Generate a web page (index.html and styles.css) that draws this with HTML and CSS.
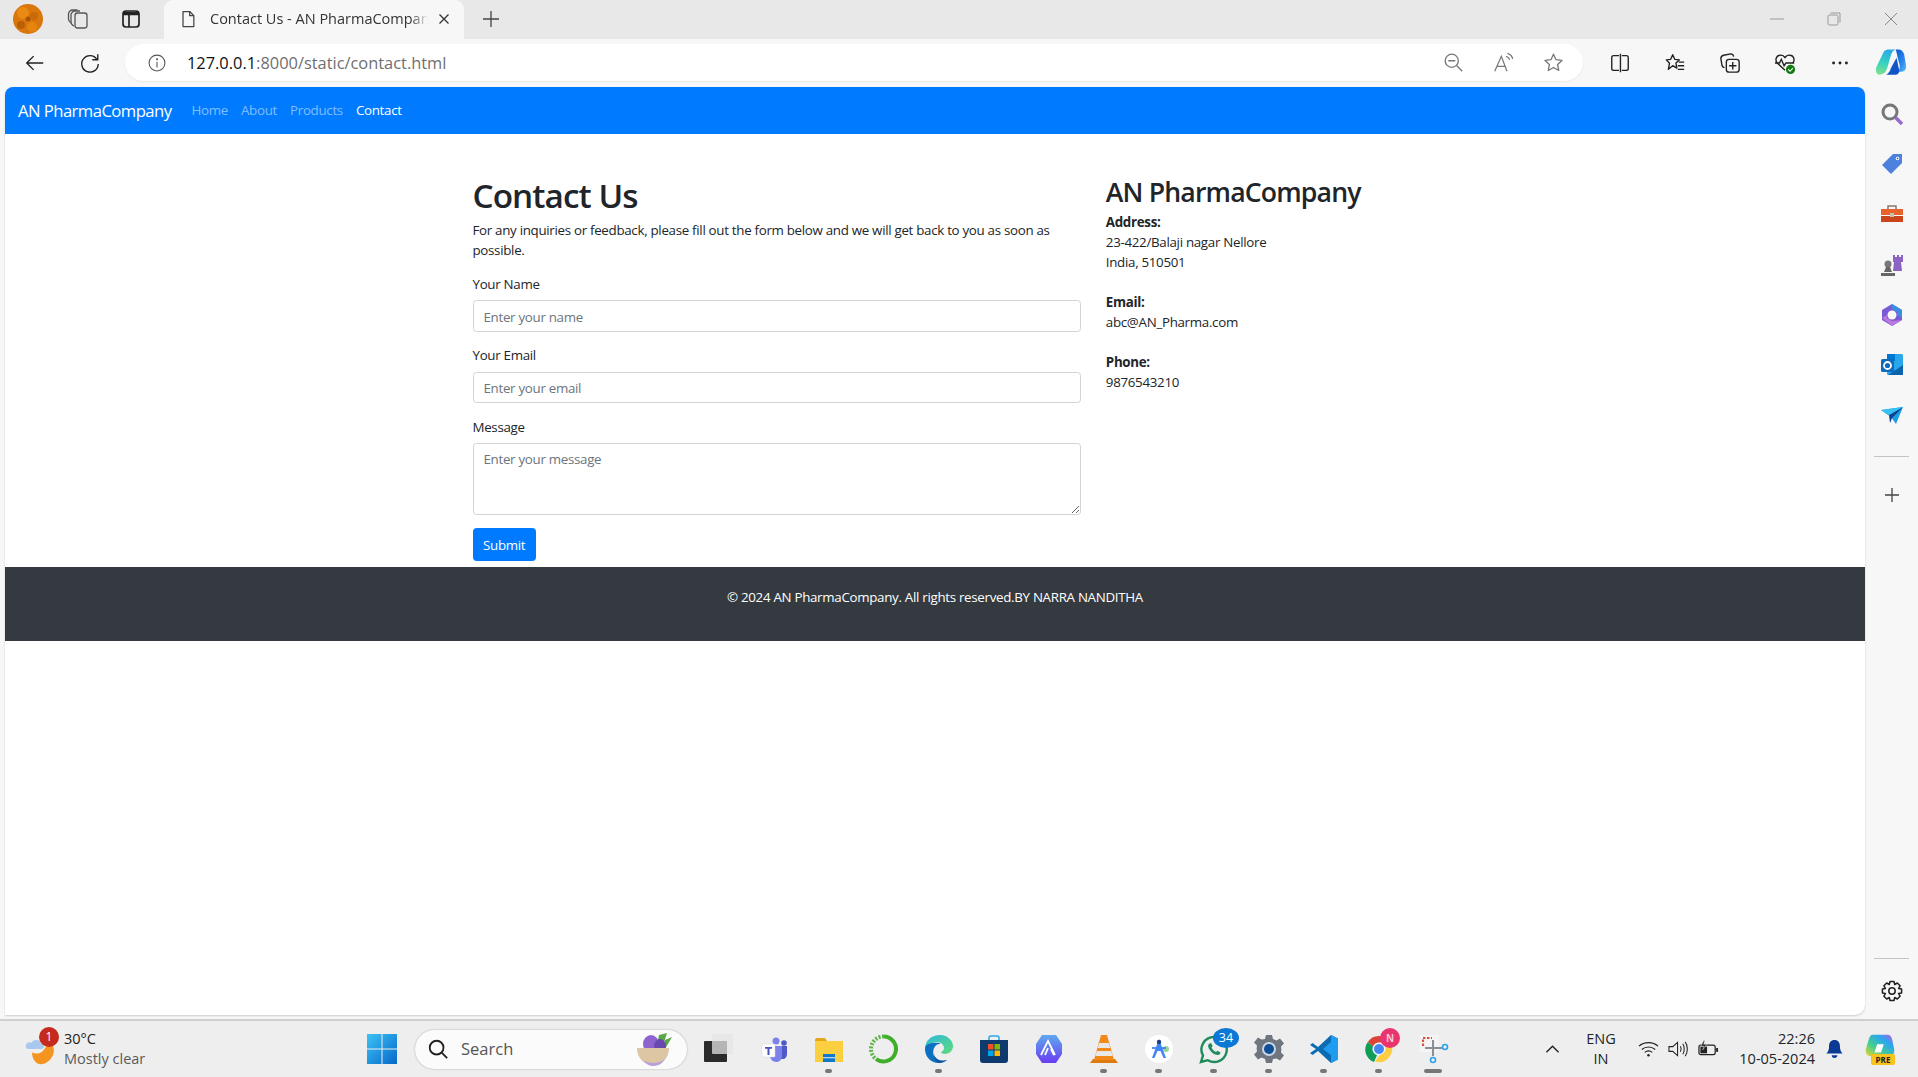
FILE: index.html
```html
<!DOCTYPE html>
<html lang="en">
<head>
  <meta charset="UTF-8">
  <meta name="viewport" content="width=device-width, initial-scale=1.0">
  <title>Contact Us - AN PharmaCompany</title>
  <link rel="stylesheet" href="styles.css">
</head>
<body>
  <!-- browser tab strip -->
  <div class="tabbar">
    <svg class="avatar" viewBox="0 0 30 30"><circle cx="15" cy="15" r="15" fill="#d9760c"/><circle cx="10" cy="9" r="6" fill="#e98a12"/><circle cx="21" cy="12" r="4" fill="#c96a08"/><circle cx="8" cy="21" r="4" fill="#b85f08"/><circle cx="19" cy="23" r="5" fill="#e58510"/><circle cx="15" cy="15" r="2.500" fill="#a95305"/></svg>
    <svg class="tb-icon" viewBox="0 0 24 24" fill="none" stroke="#555" stroke-width="1.300"><rect x="9" y="6" width="12" height="15" rx="2.500" fill="#e8e8e8"/><path d="M8 19c-2-1-3-2-3-4V8c0-2 2-4 4-4h5"/><path d="M5 16c-1.500-1-2.500-2-2.500-4V7c0-2 2-4 4-4h5"/></svg>
    <svg class="tb-icon" viewBox="0 0 24 24" fill="none" stroke="#222" stroke-width="1.700"><rect x="4" y="4" width="16" height="16" rx="3"/><path d="M4 6.500h16" stroke-width="3.500"/><path d="M10 8v12"/></svg>
    <div class="tab">
      <svg class="tab-doc" viewBox="0 0 24 24" fill="none" stroke="#444" stroke-width="1.500"><path d="M6 3h8l5 5v13H6z" stroke-linejoin="round"/><path d="M14 3v5h5"/></svg>
      <span class="tab-title">Contact Us - AN PharmaCompany</span>
      <svg class="tab-close" viewBox="0 0 12 12" stroke="#333" stroke-width="1.300"><path d="M1.500 1.500l9 9M10.500 1.500l-9 9"/></svg>
    </div>
    <svg class="tab-new" viewBox="0 0 20 20" stroke="#444" stroke-width="1.300"><path d="M10 2v16M2 10h16"/></svg>
    <div class="win-controls">
      <svg viewBox="0 0 14 14" stroke="#999" fill="none"><path d="M0 7h14"/></svg>
      <svg viewBox="0 0 14 14" stroke="#999" fill="none"><rect x="1" y="3" width="10" height="10" rx="1.500"/><path d="M3.500 1H13v9.500"/></svg>
      <svg viewBox="0 0 14 14" stroke="#888" fill="none"><path d="M1 1l12 12M13 1L1 13"/></svg>
    </div>
  </div>

  <!-- address bar row -->
  <div class="toolbar">
    <svg class="nav-btn" viewBox="0 0 24 24" fill="none" stroke="#222" stroke-width="1.500"><path d="M21 12H3M10.500 4.500L3 12l7.500 7.500"/></svg>
    <svg class="nav-btn" viewBox="0 0 24 24" fill="none" stroke="#222" stroke-width="1.500"><path d="M19.500 8A9 9 0 1 0 21 13"/><path d="M20.500 2.500V8.500H14.500"/></svg>
    <div class="address">
      <svg class="addr-info" viewBox="0 0 24 24" fill="none" stroke="#555" stroke-width="1.300"><circle cx="12" cy="12" r="9.500"/><path d="M12 10.500v7"/><circle cx="12" cy="7.500" r=".6"/></svg>
      <span class="url">127.0.0.1<span class="url-rest">:8000/static/contact.html</span></span>
      <div class="addr-actions">
        <svg viewBox="0 0 24 24" fill="none" stroke="#777" stroke-width="1.500"><circle cx="10" cy="10" r="7.500"/><path d="M6 10h8M15.500 15.500L22 22"/></svg>
        <svg viewBox="0 0 24 24" fill="none" stroke="#777" stroke-width="1.400"><path d="M2 22L9.500 5 16 22M4.500 16.500h10"/><path d="M15 5c2 .5 3.500 2 4 4M16.500 1.500c3 1 5.500 3.500 6 6.500"/></svg>
        <svg viewBox="0 0 24 24" fill="none" stroke="#777" stroke-width="1.500"><path d="M12 2.500l2.900 6.300 6.800.8-5 4.700 1.300 6.800-6-3.400-6 3.400 1.300-6.800-5-4.700 6.800-.8z" stroke-linejoin="round"/></svg>
      </div>
    </div>
    <div class="tool-actions">
      <svg viewBox="0 0 24 24" fill="none" stroke="#222" stroke-width="1.500"><path d="M11 4H5a2 2 0 0 0-2 2v12a2 2 0 0 0 2 2h6M14 4h5a2 2 0 0 1 2 2v12a2 2 0 0 1-2 2h-5M12.500 2v20"/></svg>
      <svg viewBox="0 0 24 24" fill="none" stroke="#222" stroke-width="1.500"><path d="M9.500 3l2.200 5 5 .6-3.700 3.500 1 5.400-4.500-2.600-4.800 4 1.300-6.600L2.500 8.600l4.800-.6z" stroke-linejoin="round"/><path d="M16 11h6M15 15h7M15 19h7"/></svg>
      <svg viewBox="0 0 24 24" fill="none" stroke="#222" stroke-width="1.500"><rect x="8" y="8" width="14" height="14" rx="3"/><path d="M15 11v8M11 15h8"/><path d="M6 17c-2-.5-3-2-3-4l-1-6c0-2 1-3 3-3.500l8-1.500c1.500 0 2.500 1 3 3"/></svg>
      <svg viewBox="0 0 24 24" fill="none" stroke="#222" stroke-width="1.500"><path d="M12 20L3.500 12C1 9 2 4 6.500 3.500 9 3 11 4.500 12 6c1-1.500 3-3 5.500-2.500C22 4 23 9 20.500 12"/><path d="M1 12h5l2-4 3 7 2-3h9"/><circle cx="18" cy="19" r="5" fill="#107c10" stroke="none"/><path d="M15.500 19l2 2 3-3.500" stroke="#fff" stroke-width="1.200"/></svg>
      <svg viewBox="0 0 24 24" fill="#222"><circle cx="5" cy="12" r="1.600"/><circle cx="12" cy="12" r="1.600"/><circle cx="19" cy="12" r="1.600"/></svg>
    </div>
    <svg class="copilot" viewBox="0 0 32 28">
      <defs>
        <linearGradient id="cop" x1="0.500" y1="0" x2="0.300" y2="1"><stop offset="0" stop-color="#2aa8e8"/><stop offset=".55" stop-color="#38d3c0"/><stop offset="1" stop-color="#7fe08c"/></linearGradient>
        <linearGradient id="cop2" x1="0.200" y1="0" x2="1" y2="1"><stop offset="0" stop-color="#0b5fd4"/><stop offset=".6" stop-color="#2f8cf0"/><stop offset="1" stop-color="#5cc4f5"/></linearGradient>
      </defs>
      <path d="M8 3c1-2 3-3 5-3h8c-3 1-4 3-5 6l-4 14c-1 4-4 7-8 7H3c-3-1-4-4-3-7z" fill="url(#cop)"/>
      <path d="M21 0h3c3 0 5 2 6 5l2 12c1 5-2 7-5 7h-5c3-1 4-4 3-8l-2-8c-.5-2-1-6-2-8z" fill="url(#cop2)"/>
      <path d="M22 9l-6 11c-1 4-3 6-5 7h10c3 0 5-3 3-8z" fill="#0f55c8"/>
    </svg>
  </div>

  <div class="browser-body">
    <div class="page">
      <nav class="navbar">
        <a class="brand">AN PharmaCompany</a>
        <a class="nav-link">Home</a>
        <a class="nav-link">About</a>
        <a class="nav-link">Products</a>
        <a class="nav-link current">Contact</a>
      </nav>

      <main class="container">
        <section class="contact-form">
          <h1>Contact Us</h1>
          <p>For any inquiries or feedback, please fill out the form below and we will get back to you as soon as possible.</p>
          <form>
            <div class="form-group">
              <label for="name">Your Name</label>
              <input id="name" type="text" placeholder="Enter your name">
            </div>
            <div class="form-group">
              <label for="email">Your Email</label>
              <input id="email" type="email" placeholder="Enter your email">
            </div>
            <div class="form-group">
              <label for="message">Message</label>
              <textarea id="message" rows="3" placeholder="Enter your message"></textarea>
            </div>
            <button type="button" class="btn-submit">Submit</button>
          </form>
        </section>
        <section class="contact-info">
          <h2>AN PharmaCompany</h2>
          <p><strong>Address:</strong><br>23-422/Balaji nagar Nellore<br>India, 510501</p>
          <p><strong>Email:</strong><br>abc@AN_Pharma.com</p>
          <p><strong>Phone:</strong><br>9876543210</p>
        </section>
      </main>

      <footer class="footer">
        <p>© 2024 AN PharmaCompany. All rights reserved.BY NARRA NANDITHA</p>
      </footer>
    </div>

    <!-- edge sidebar -->
    <aside class="sidebar">
      <svg viewBox="0 0 24 24" fill="none"><circle cx="10" cy="10" r="7" stroke="#777" stroke-width="3"/><path d="M15.500 15.500L22 22" stroke="#9a6ad0" stroke-width="3.500"/></svg>
      <svg viewBox="0 0 24 24"><path d="M13 2h9v9L11 22 2 13z" fill="#4c82dd"/><circle cx="17.500" cy="6.500" r="1.800" fill="#fff"/><circle cx="17.500" cy="6.500" r=".8" fill="#25479a"/></svg>
      <svg viewBox="0 0 24 24"><path d="M8 7V4h8v3" fill="none" stroke="#8a7a70" stroke-width="1.500"/><path d="M1 7h22v6H1z" fill="#e8622c"/><path d="M1 14h22v6H1z" fill="#c9441a"/><rect x="10" y="11" width="4" height="4" fill="#c8bdb5"/></svg>
      <svg viewBox="0 0 24 24"><circle cx="8" cy="11" r="3.500" fill="#777"/><path d="M6 14h4l2 5H4zM1 20h14v3H1z" fill="#666"/><path d="M14 2h2v2h2V2h2v2h2V2h2v7h-2l1 9H14l1-9h-1z" fill="#8a63c4" transform="translate(-1 0)"/></svg>
      <svg viewBox="0 0 24 24"><path d="M12 1l10 6v10l-10 6-10-6V7z" fill="#7a5bd6"/><path d="M12 1l10 6v8l-5-3V9l-5-3z" fill="#3a8fe0"/><path d="M2 15l5-3v3l5 3 10-1-10 6z" fill="#b978dd"/><circle cx="12" cy="12" r="4.500" fill="#f7f7f7"/></svg>
      <svg viewBox="0 0 24 24"><rect x="7" y="1" width="16" height="21" rx="1.500" fill="#28a8ea"/><path d="M7 1h8v7H7z" fill="#0078d4"/><path d="M8 22l15-10v10z" fill="#0a64ad"/><rect x="1" y="6" width="13" height="13" rx="1.500" fill="#0f6cbd"/><circle cx="7.500" cy="12.500" r="3.500" fill="none" stroke="#fff" stroke-width="1.800"/></svg>
      <svg viewBox="0 0 24 24"><path d="M1 7l22-3-7 17-5-7z" fill="#1b9de2"/><path d="M23 4L9 12l1 8 2-5z" fill="#0b3f8f"/><path d="M1 7l8 5L23 4z" fill="#36c1f0"/></svg>
      <hr class="side-rule">
      <svg class="side-plus" viewBox="0 0 20 20" stroke="#444" stroke-width="1.300"><path d="M10 3v14M3 10h14"/></svg>
      <hr class="side-rule rule-bottom">
      <svg class="side-gear" viewBox="0 0 24 24" fill="none" stroke="#222" stroke-width="1.500"><circle cx="12" cy="12" r="3.200"/><path d="M10 2.500h4l.7 3 2.600-1.500 2.800 2.800-1.500 2.600 3 .7v3.800l-3 .7 1.500 2.600-2.800 2.800-2.600-1.500-.7 3h-4l-.7-3-2.600 1.500-2.800-2.800 1.500-2.600-3-.7V10.100l3-.7-1.500-2.600 2.800-2.800 2.600 1.500z" stroke-linejoin="round"/></svg>
    </aside>
  </div>

  <!-- windows taskbar -->
  <div class="taskbar">
    <div class="weather">
      <svg class="weather-icon" viewBox="0 0 34 36"><path d="M8 22C16 26 24 20 26 8c6 4 8 10 6 16-3 8-10 12-16 11-5-1-8-7-8-13z" fill="#f5951f"/><path d="M3 18a4 4 0 0 1 4-7 6 6 0 0 1 11 1 3 3 0 0 1 1 6z" fill="#a9c8ee"/></svg>
      <span class="weather-badge">1</span>
      <div class="weather-text"><span class="temp">30°C</span><span class="cond">Mostly clear</span></div>
    </div>
    <svg class="start" viewBox="0 0 30 30"><defs><linearGradient id="win" x1="0" y1="0" x2="1" y2="1"><stop offset="0" stop-color="#3cc3f6"/><stop offset="1" stop-color="#0668c9"/></linearGradient></defs><path d="M0 0h14.500v14.500H0zM15.500 0H30v14.500H15.500zM0 15.500h14.500V30H0zM15.500 15.500H30V30H15.500z" fill="url(#win)"/></svg>
    <div class="search-pill">
      <svg class="search-q" viewBox="0 0 24 24" fill="none" stroke="#222" stroke-width="2"><circle cx="10.500" cy="10.500" r="7.500"/><path d="M16 16l6 6"/></svg>
      <span>Search</span>
      <svg class="search-bowl" viewBox="0 0 38 34"><path d="M24 3l8-2-4 13-6-1zM30 8l7-3-7 12z" fill="#5aa845"/><ellipse cx="16" cy="12" rx="8" ry="9" fill="#8e63cf"/><ellipse cx="25" cy="14" rx="6" ry="7" fill="#6a47ac"/><path d="M2 16h32c0 10-7 17-16 17S2 26 2 16z" fill="#dcc6a4"/><path d="M8 28c6 4 16 4 22-1-3 5-7 7-12 7-4 0-7-2-10-6z" fill="#b9a0dc"/></svg>
    </div>
    <div class="task-icons">
      <div class="task-icon">
        <svg viewBox="0 0 30 30"><rect x="0" y="7" width="23" height="21" rx="1" fill="#2b2b2b"/><rect x="8" y="0" width="21" height="20" rx="1" fill="#e4e4e4" fill-opacity=".75"/></svg>
      </div>
      <div class="task-icon">
        <svg viewBox="0 0 30 30"><circle cx="17" cy="7" r="3.500" fill="#7b83eb"/><circle cx="25" cy="9" r="2.800" fill="#5059c9"/><path d="M21 12h7v8c0 3-2 5-4 5h-3z" fill="#5059c9"/><path d="M11 12h12v10c0 4-3 6-6 6s-6-3-6-6z" fill="#7b83eb"/><rect x="3" y="10" width="13" height="13" rx="1" fill="#fff" stroke="#d0d0e8" stroke-width=".5"/><path d="M6 13h7v1.800h-2.500V21H8.500v-6.200H6z" fill="#4b53bc"/></svg>
      </div>
      <div class="task-icon has-dot">
        <svg viewBox="0 0 30 30"><path d="M1 6a2 2 0 0 1 2-2h8l2 3h-12z" fill="#e2a61b"/><path d="M1 7h28v21H1z" fill="#fbcf3f"/><rect x="9" y="20" width="12" height="8" fill="#0f78c8"/><rect x="9" y="23" width="12" height="1.300" fill="#fff" opacity=".7"/></svg>
      </div>
      <div class="task-icon">
        <svg viewBox="0 0 30 30" fill="none"><path d="M15 2.500A12.500 12.500 0 1 1 7 25" stroke="#3fae2a" stroke-width="4"/><path d="M15 2.500A12.500 12.500 0 0 0 7 25" stroke="#5cb54a" stroke-width="4" stroke-dasharray="2 1.500"/></svg>
      </div>
      <div class="task-icon has-dot">
        <svg viewBox="0 0 30 30"><defs><linearGradient id="edge" x1="0" y1="0" x2="1" y2="1"><stop offset="0" stop-color="#2bb8dc"/><stop offset="1" stop-color="#5fdc7a"/></linearGradient></defs><path d="M1 15C1 6 8 1 16 1c8 0 13 6 13 11 0 5-4 8-8 8-2 0-4-1-4-2 2-1 3-2 3-4 0-3-3-6-7-6-6 0-10 4-10 9 0 0-2-1-2-2z" fill="url(#edge)"/><path d="M1 15c0 8 6 14 14 14 3 0 6-1 8-3-6 2-11 0-13-4-2-5 0-11 5-12 2 0 1-1 0-1C7 8 1 10 1 15z" fill="#0f6fc0"/><path d="M10 20c1 5 6 8 13 6-3 2-6 3-8 3-3-1-5-4-5-9z" fill="#0b559e"/></svg>
      </div>
      <div class="task-icon">
        <svg viewBox="0 0 30 30"><path d="M10 7V4a2 2 0 0 1 2-2h6a2 2 0 0 1 2 2v3" fill="none" stroke="#28a8ea" stroke-width="1.500"/><path d="M1 6h28v20a3 3 0 0 1-3 3H4a3 3 0 0 1-3-3z" fill="#0e3a6d"/><rect x="9" y="10" width="5.500" height="5.500" fill="#f25022"/><rect x="15.500" y="10" width="5.500" height="5.500" fill="#7fba00"/><rect x="9" y="16.500" width="5.500" height="5.500" fill="#00a4ef"/><rect x="15.500" y="16.500" width="5.500" height="5.500" fill="#ffb900"/></svg>
      </div>
      <div class="task-icon">
        <svg viewBox="0 0 30 30"><defs><linearGradient id="hex" x1="0" y1="0" x2="0" y2="1"><stop offset="0" stop-color="#5da9f0"/><stop offset="1" stop-color="#6a3df0"/></linearGradient></defs><path d="M8 1h14l6 9v10l-6 9H8l-6-9V10z" fill="url(#hex)"/><path d="M7 21L14 7l7 14M11 21l3-7M17 15l3 6" fill="none" stroke="#fff" stroke-width="1.800"/></svg>
      </div>
      <div class="task-icon has-dot">
        <svg viewBox="0 0 30 30"><path d="M4 25h22l3 4H1z" fill="#e07a10"/><path d="M12 1h6l7 25H5z" fill="#f18a1a"/><path d="M10.200 9h9.600l1.500 5H8.700zM7.800 17h14.400l1.500 5H6.300z" fill="#e8e8e8"/></svg>
      </div>
      <div class="task-icon has-dot">
        <svg viewBox="0 0 30 30"><circle cx="15" cy="15" r="14" fill="#fff"/><circle cx="22" cy="15" r="3" fill="#6fbf73" opacity=".7"/><path d="M15 5l-7 19h2.500l3-7h3l3 7H22z" fill="#4285f4"/><path d="M8 14h14" stroke="#4285f4" stroke-width="1.800"/><circle cx="15" cy="8" r="2.200" fill="#1a3f8a"/></svg>
      </div>
      <div class="task-icon has-dot">
        <svg viewBox="0 0 30 30"><path d="M15 3a12.500 12.500 0 0 0-11 18.500L2 28l6.800-1.800A12.500 12.500 0 1 0 15 3z" fill="none" stroke="#1f8a5b" stroke-width="2.400"/><path d="M10.500 9.500c-1.500 1-2 3 0 6s5 5.500 8 5.500c2 0 3-1.500 3-2.500l-3-1.800-1.500 1.300c-2-1-3.500-2.500-4.500-4.500l1.200-1.500L12 9z" fill="#1f8a5b"/></svg>
        <span class="count-badge">34</span>
      </div>
      <div class="task-icon has-dot">
        <svg viewBox="0 0 30 30"><path d="M12 1h6l1 4 3.500 1.500 3.500-2 4 5-3 3 .4 3-.4 3 3 3-4 5-3.500-2L19 25l-1 4h-6l-1-4-3.500-1.500-3.500 2-4-5 3-3-.4-3 .4-3-3-3 4-5 3.500 2L11 5z" fill="#6f7680"/><circle cx="15" cy="15" r="7" fill="#c9d6e6"/><circle cx="15" cy="15" r="5" fill="#0e4f96"/></svg>
      </div>
      <div class="task-icon has-dot">
        <svg viewBox="0 0 30 30"><path d="M22 1l7 3.500v21L22 29 9 17l-5.500 4L1 19l6-4-6-4 2.500-2L9 13z" fill="#0b6cb4"/><path d="M22 1l7 3.500v21L22 29V21l-8-6 8-7z" fill="#1f9cf0"/></svg>
      </div>
      <div class="task-icon has-dot">
        <svg viewBox="0 0 30 30"><path d="M15 2a13 13 0 0 1 11.300 6.500H15a6.500 6.500 0 0 0-6 4L3.800 8A13 13 0 0 1 15 2z" fill="#db4437"/><path d="M3.800 8L9 12.500a6.500 6.500 0 0 0 4 8.800L10 28A13 13 0 0 1 3.800 8z" fill="#0f9d58"/><path d="M26.300 8.500A13 13 0 0 1 11 27.400l5-7a6.500 6.500 0 0 0 5-9.500z" fill="#ffcd40"/><circle cx="15" cy="15" r="5.500" fill="#4285f4" stroke="#fff" stroke-width="1"/></svg>
        <span class="profile-badge">N</span>
      </div>
      <div class="task-icon has-dot wide-dot">
        <svg viewBox="0 0 30 30" fill="none"><rect x="1" y="1" width="19" height="17" fill="#f4f4f4"/><path d="M4 12V4h9" stroke="#d4553a" stroke-width="2.200" stroke-dasharray="2.500 1.500"/><path d="M14 6v16M6 14h18" stroke="#8a8f96" stroke-width="2"/><circle cx="26" cy="13" r="2.500" stroke="#2ea3e8" stroke-width="1.600"/><circle cx="14" cy="26" r="2.500" stroke="#2ea3e8" stroke-width="1.600"/></svg>
      </div>
    </div>
    <div class="tray">
      <svg class="tray-chevron" viewBox="0 0 16 10" fill="none" stroke="#222" stroke-width="1.500"><path d="M1.500 8.500L8 2l6.500 6.500"/></svg>
      <div class="lang"><span>ENG</span><span>IN</span></div>
      <div class="tray-icons">
        <svg viewBox="0 0 22 18" fill="none" stroke="#222" stroke-width="1.200"><path d="M1 6c5.500-5 14.500-5 20 0M4 9.500c4-3.500 10-3.500 14 0M7 12.500c2.500-2 5.500-2 8 0"/><circle cx="11" cy="15.500" r="1.300" fill="#222" stroke="none"/></svg>
        <svg viewBox="0 0 22 18" fill="none" stroke="#222" stroke-width="1.100"><path d="M1 6.500h4L10 2v14l-5-4.500H1zM13 6c1 1.800 1 4.200 0 6M15.500 3.500c2 3 2 8 0 11M18 1.500c3 4 3 11 0 15"/></svg>
        <svg viewBox="0 0 22 18"><rect x="1" y="5" width="17" height="10" rx="2" fill="none" stroke="#222" stroke-width="1.300"/><rect x="2.500" y="6.500" width="7" height="7" fill="#222"/><rect x="19" y="8" width="2" height="4" fill="#222"/><path d="M6 0L3 6h3l-1 4 4-6H6l1-4z" fill="#222" stroke="#eee" stroke-width=".5"/></svg>
      </div>
      <div class="clock"><span>22:26</span><span>10-05-2024</span></div>
      <svg class="bell" viewBox="0 0 18 22" fill="#0b3a94"><path d="M9 1c-4 0-6 3-6 7 0 4-1 6-3 8h18c-2-2-3-4-3-8 0-4-2-7-6-7z"/><path d="M6 18a3 3 0 0 0 6 0z"/></svg>
      <div class="copilot-pre">
        <svg viewBox="0 0 32 26"><defs><linearGradient id="pre" x1="0" y1="1" x2="1" y2="0"><stop offset="0" stop-color="#f5d327"/><stop offset=".35" stop-color="#46cf8c"/><stop offset=".7" stop-color="#2aa6f0"/><stop offset="1" stop-color="#c25ad8"/></linearGradient></defs><path d="M8 1h16c3 0 4 2 5 5l2 10c1 4-1 8-5 8H6c-4 0-6-4-5-8L4 6c1-3 2-5 4-5z" fill="url(#pre)"/><path d="M13 11h7l-3 9h-7z" fill="#fff"/></svg>
        <span class="pre-tag">PRE</span>
      </div>
    </div>
  </div>
</body>
</html>
```

FILE: styles.css
```css
* {
  box-sizing: border-box;
}

html,
body {
  height: 100%;
}

body {
  margin: 0;
  display: flex;
  flex-direction: column;
  overflow: hidden;
  font-family: "Open Sans", "Noto Sans", sans-serif;
  font-size: 13.33px;
  line-height: 20px;
  color: #212529;
  background: #f7f7f7;
}

/* tab strip */
.tabbar {
  height: 39px;
  flex: none;
  display: flex;
  align-items: center;
  background: #e8e8e8;
  padding-left: 13px;
}

.avatar {
  width: 30px;
  height: 30px;
  margin-top: -2px;
}

.tb-icon {
  width: 24px;
  height: 24px;
  margin-left: 23px;
  margin-top: -2px;
}

.tb-icon + .tb-icon {
  margin-left: 29px;
}

.tab {
  width: 300px;
  height: 39px;
  margin-left: 21px;
  padding: 0 14px 2px 14px;
  display: flex;
  align-items: center;
  background: #f7f7f7;
  border-radius: 9px 9px 0 0;
}

.tab-doc {
  width: 20px;
  height: 22px;
  flex: none;
}

.tab-title {
  flex: 1;
  margin-left: 12px;
  overflow: hidden;
  white-space: nowrap;
  font-size: 14.5px;
  color: #333;
  -webkit-mask-image: linear-gradient(to right, #000 92%, transparent);
  mask-image: linear-gradient(to right, #000 92%, transparent);
}

.tab-close {
  width: 12px;
  height: 12px;
  flex: none;
  margin-left: 10px;
}

.tab-new {
  width: 20px;
  height: 20px;
  margin-left: 17px;
  margin-top: -2px;
}

.win-controls {
  margin-left: auto;
  margin-right: 20px;
  margin-top: -2px;
  display: flex;
  gap: 43px;
}

.win-controls svg {
  width: 14px;
  height: 14px;
}

/* address bar */
.toolbar {
  height: 48px;
  flex: none;
  display: flex;
  align-items: center;
  padding: 0 12px 1px 24px;
  background: #f7f7f7;
}

.nav-btn {
  width: 22px;
  height: 22px;
}

.nav-btn + .nav-btn {
  margin-left: 33px;
}

.address {
  width: 1460px;
  height: 37px;
  margin-left: 24px;
  padding: 0 19px 0 22px;
  display: flex;
  align-items: center;
  background: #fff;
  border-radius: 19px;
  box-shadow: 0 1px 2px rgba(0, 0, 0, 0.06);
}

.addr-info {
  width: 20px;
  height: 20px;
  flex: none;
}

.url {
  margin-left: 20px;
  font-size: 16.4px;
  color: #111;
}

.url-rest {
  color: #6f6f6f;
}

.addr-actions {
  margin-left: auto;
  display: flex;
  gap: 29px;
}

.addr-actions svg {
  width: 21px;
  height: 21px;
}

.tool-actions {
  margin-left: 26px;
  display: flex;
  gap: 33px;
}

.tool-actions svg {
  width: 22px;
  height: 22px;
}

.copilot {
  width: 30px;
  height: 27px;
  margin-left: 25px;
}

/* page area + edge sidebar */
.browser-body {
  flex: 1;
  display: flex;
  min-height: 0;
  padding-left: 5px;
}

.page {
  width: 1860px;
  height: 928px;
  background: #fff;
  border-radius: 8px 8px 10px 0;
  box-shadow: 0 1px 2px rgba(0, 0, 0, 0.18);
  overflow: hidden;
  letter-spacing: -0.3px;
}

.navbar {
  height: 47px;
  display: flex;
  align-items: center;
  padding: 0 13px;
  background: #007bff;
}

.brand {
  margin-right: 13.5px;
  font-size: 16.67px;
  letter-spacing: -0.55px;
  color: #fff;
}

.nav-link {
  padding: 0 6.5px 2px;
  color: rgba(255, 255, 255, 0.5);
}

.nav-link.current {
  color: #fff;
}

.container {
  width: 950px;
  margin: 40px auto 0;
  display: grid;
  grid-template-columns: 2fr 1fr;
}

.contact-form,
.contact-info {
  padding: 0 12.5px;
}

h1 {
  margin: 0 0 5.2px;
  padding-top: 1px;
  font-size: 33.33px;
  line-height: 40px;
  font-weight: 600;
  letter-spacing: -0.95px;
}

h2 {
  margin: 0 0 3.67px;
  padding-top: 2px;
  font-size: 26.67px;
  line-height: 32px;
  font-weight: 600;
  letter-spacing: -0.85px;
}

p {
  margin: 0 0 13.33px;
}

strong {
  font-weight: 700;
}

.contact-info p {
  margin-bottom: 20px;
}

.form-group {
  margin-bottom: 13.33px;
}

label {
  display: block;
  margin-bottom: 6.67px;
}

input,
textarea {
  display: block;
  width: 100%;
  padding: 5.5px 10px 4.5px;
  font: inherit;
  letter-spacing: inherit;
  color: #495057;
  background: #fff;
  border: 1px solid #ced4da;
  border-radius: 3.33px;
}

input {
  height: 31.67px;
}

textarea {
  height: 71.7px;
  padding-top: 5px;
}

::placeholder {
  color: #6c757d;
  opacity: 1;
}

.btn-submit {
  display: block;
  height: 33px;
  padding: 0 9.5px;
  font: inherit;
  letter-spacing: inherit;
  color: #fff;
  background: #007bff;
  border: 1px solid #007bff;
  border-radius: 3.33px;
}

.footer {
  margin-top: 6px;
  padding: 20px;
  text-align: center;
  color: #fff;
  background: #343a40;
}

/* sidebar */
.sidebar {
  flex: 1;
  height: 928px;
  display: flex;
  flex-direction: column;
  align-items: center;
  padding-top: 15px;
  gap: 26.2px;
}

.sidebar svg {
  width: 24px;
  height: 24px;
  flex: none;
}

.side-rule {
  width: 35px;
  height: 1px;
  flex: none;
  margin: 3px 0;
  border: 0;
  background: #c4c4c4;
}

.sidebar .side-plus {
  width: 20px;
  height: 20px;
  margin-top: -2px;
}

.rule-bottom {
  margin-top: auto;
}

.sidebar .side-gear {
  width: 24px;
  height: 24px;
  margin-bottom: 12px;
  margin-top: -9px;
}

/* taskbar */
.taskbar {
  height: 58px;
  flex: none;
  display: flex;
  align-items: center;
  padding-left: 25px;
  background: #eeeeee;
  border-top: 2px solid #cfcfcf;
  font-size: 14.5px;
}

.weather {
  width: 342px;
  flex: none;
  display: flex;
  align-items: center;
  position: relative;
}

.weather-icon {
  width: 30px;
  height: 34px;
  flex: none;
}

.weather-badge {
  position: absolute;
  left: 14px;
  top: -2px;
  width: 20px;
  height: 20px;
  border-radius: 50%;
  background: #c42b1c;
  color: #fff;
  font-size: 12px;
  line-height: 20px;
  text-align: center;
}

.weather-text {
  margin-left: 9px;
  display: flex;
  flex-direction: column;
  color: #222;
}

.cond {
  color: #5a5a5a;
}

.start {
  width: 30px;
  height: 30px;
  flex: none;
}

.search-pill {
  width: 272px;
  height: 39px;
  flex: none;
  margin-left: 18px;
  padding: 0 14px 0 12px;
  display: flex;
  align-items: center;
  background: #fbfbfb;
  border-radius: 20px;
  box-shadow: 0 0 2px rgba(0, 0, 0, 0.3);
  font-size: 16.5px;
  color: #555;
}

.search-q {
  width: 22px;
  height: 22px;
  flex: none;
}

.search-pill span {
  margin-left: 12px;
}

.search-bowl {
  width: 38px;
  height: 34px;
  margin-left: auto;
}

.task-icons {
  display: flex;
  flex: none;
  margin-left: 4px;
}

.task-icon {
  width: 55px;
  height: 56px;
  flex: none;
  display: flex;
  justify-content: center;
  align-items: center;
  position: relative;
}

.task-icon svg {
  width: 30px;
  height: 30px;
}

.task-icon.has-dot::after {
  content: "";
  position: absolute;
  left: 24px;
  bottom: 4px;
  width: 7px;
  height: 4px;
  border-radius: 2px;
  background: #777;
}

.task-icon.wide-dot::after {
  left: 18px;
  width: 18px;
}

.count-badge {
  position: absolute;
  left: 27px;
  top: 7px;
  width: 26px;
  height: 20px;
  border-radius: 50%;
  background: #0a78d4;
  color: #fff;
  font-size: 12.5px;
  line-height: 20px;
  text-align: center;
}

.profile-badge {
  position: absolute;
  left: 29px;
  top: 7px;
  width: 20px;
  height: 20px;
  border-radius: 50%;
  background: #e8356d;
  color: #f7c6d6;
  font-size: 10px;
  font-weight: 700;
  line-height: 20px;
  text-align: center;
}

.tray {
  flex: 1;
  display: flex;
  align-items: center;
  padding-left: 84px;
}

.tray-chevron {
  width: 15px;
  height: 10px;
  flex: none;
}

.lang {
  width: 40px;
  margin-left: 21px;
  display: flex;
  flex-direction: column;
  align-items: center;
}

.tray-icons {
  margin-left: 17px;
  display: flex;
  gap: 9px;
}

.tray-icons svg {
  width: 21px;
  height: 18px;
}

.clock {
  width: 92px;
  margin-left: 4px;
  display: flex;
  flex-direction: column;
  align-items: flex-end;
}

.bell {
  width: 17px;
  height: 20px;
  flex: none;
  margin-left: 11px;
}

.copilot-pre {
  width: 30px;
  height: 32px;
  margin-left: 22px;
  position: relative;
}

.copilot-pre svg {
  width: 30px;
  height: 26px;
  display: block;
}

.pre-tag {
  position: absolute;
  left: 6px;
  bottom: 0;
  width: 24px;
  height: 11px;
  border-radius: 2px;
  background: #f7c31c;
  color: #222;
  font-size: 8px;
  font-weight: 700;
  line-height: 11px;
  text-align: center;
}
```
